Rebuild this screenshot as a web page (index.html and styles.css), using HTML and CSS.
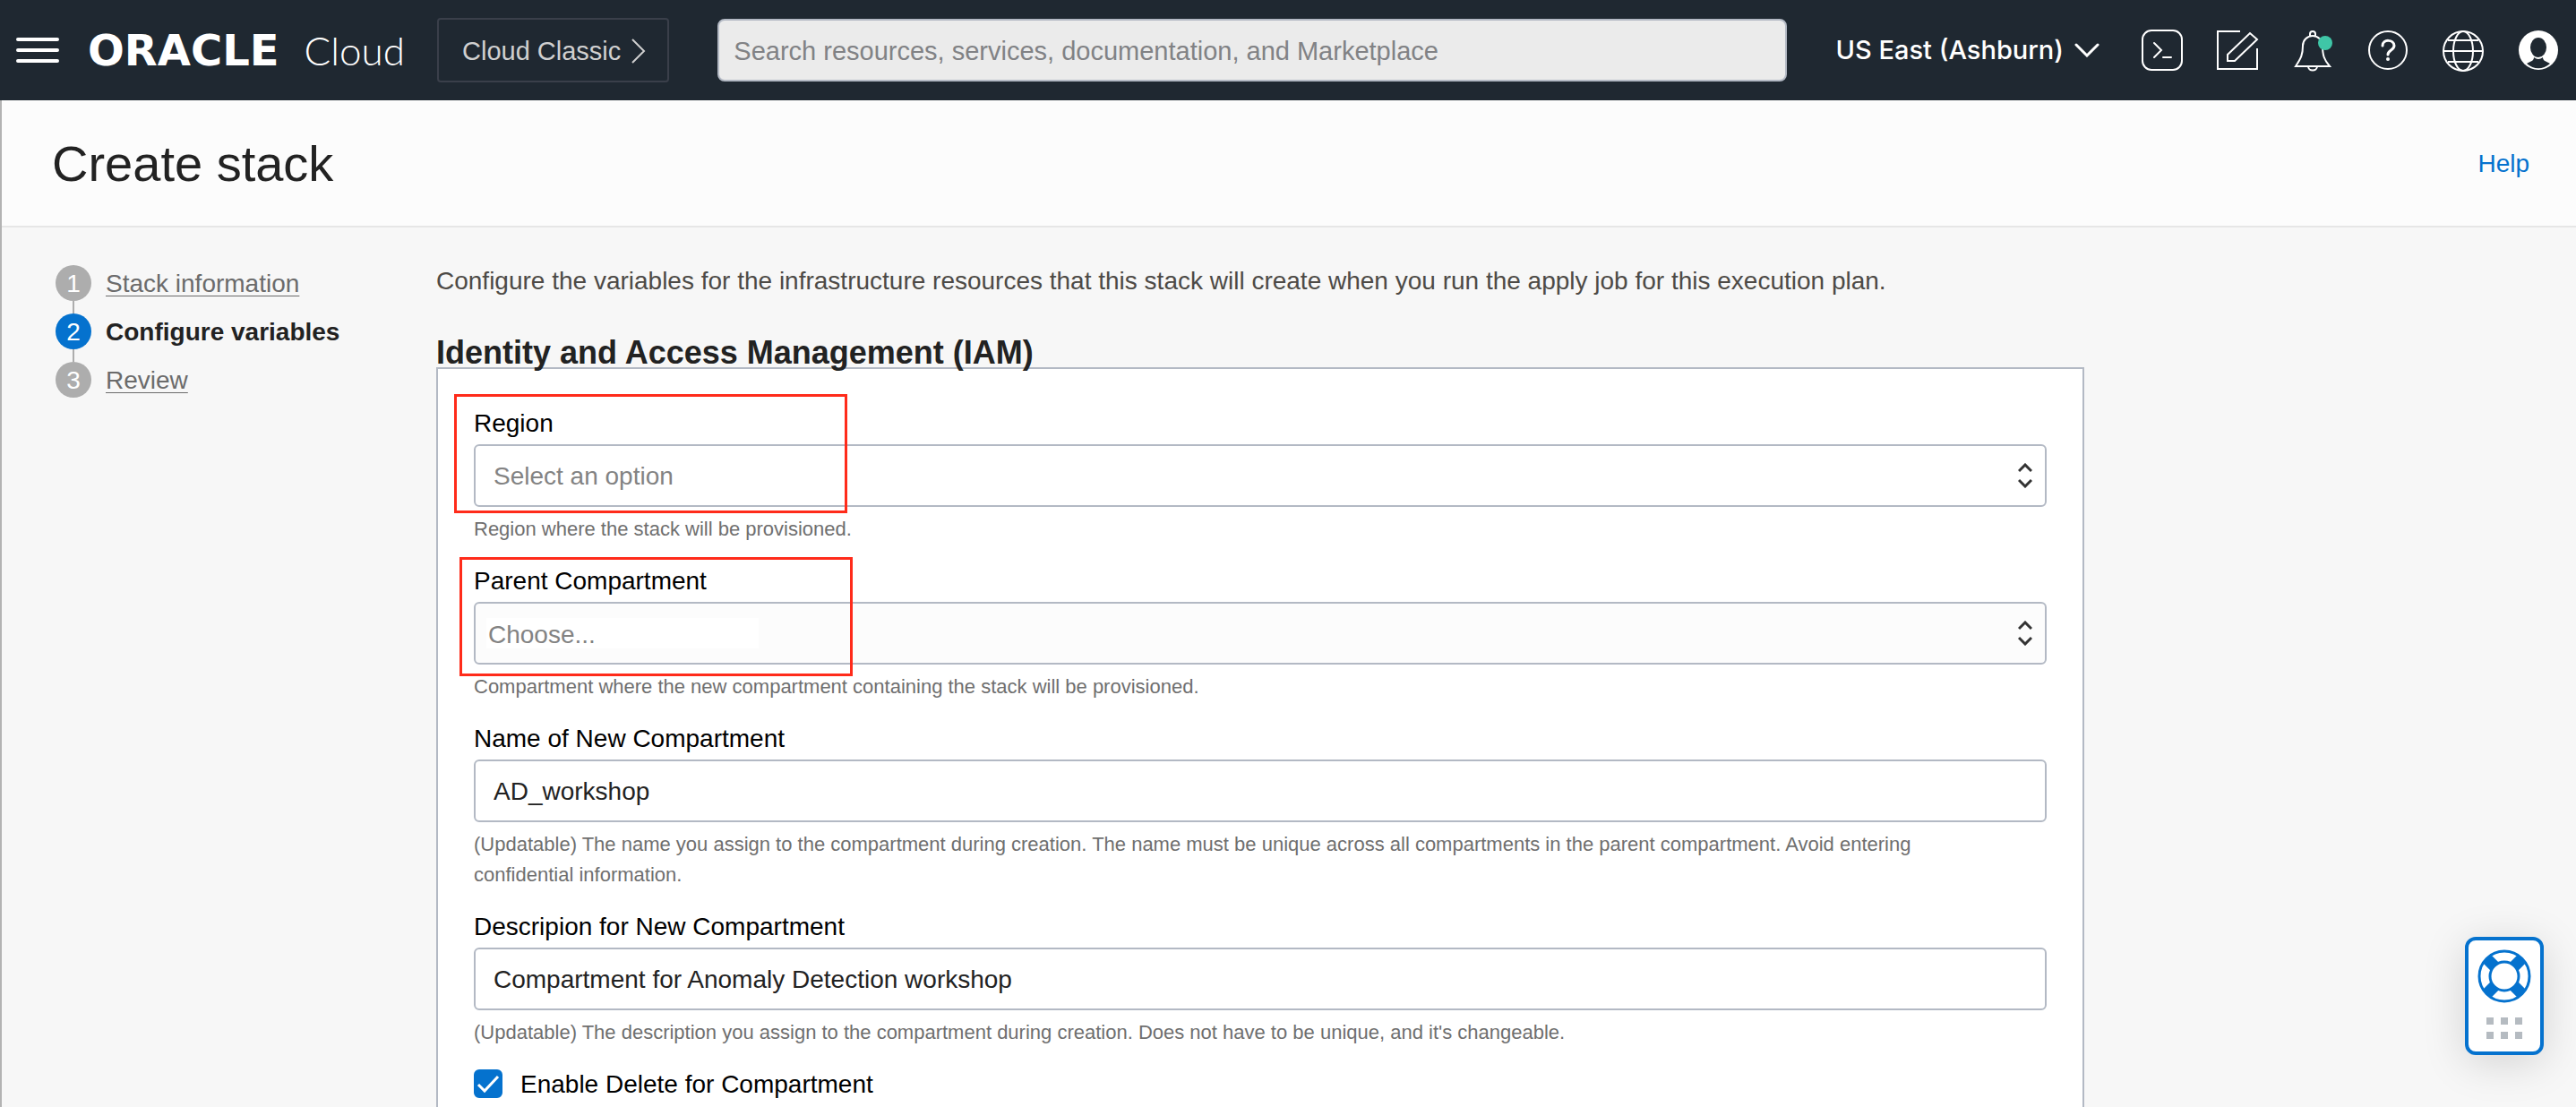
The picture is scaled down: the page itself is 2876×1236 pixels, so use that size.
FILE: index.html
```html
<!DOCTYPE html>
<html lang="en">
<head>
<meta charset="utf-8">
<meta name="viewport" content="width=device-width, initial-scale=1">
<title>Create stack</title>
<link rel="stylesheet" href="styles.css">
</head>
<body>
<header class="topbar">
  <button class="menu" type="button" aria-label="Navigation menu">
    <svg width="48" height="28" viewBox="0 0 48 28" stroke="#fff" stroke-width="4" stroke-linecap="round"><path d="M2 2h44M2 14h44M2 26h44"/></svg>
  </button>
  <a class="brand" href="#"><span class="brand-name">ORACLE</span><span class="brand-product">Cloud</span></a>
  <button class="classic" type="button">Cloud Classic
    <svg width="16" height="28" viewBox="0 0 16 28" fill="none" stroke="#d0d0d0" stroke-width="2"><path d="M1 1l13 13L1 27"/></svg>
  </button>
  <input class="search" type="search" aria-label="Search" placeholder="Search resources, services, documentation, and Marketplace">
  <button class="region" type="button">US East (Ashburn)
    <svg width="28" height="16" viewBox="0 0 28 16" fill="none" stroke="#fff" stroke-width="3" stroke-linecap="round"><path d="M2 2l12 12L26 2"/></svg>
  </button>
  <nav class="tools" aria-label="Tools">
    <button class="tool" type="button" aria-label="Developer tools">
      <svg width="48" height="48" viewBox="0 0 48 48" fill="none" stroke="#fff" stroke-width="2"><rect x="2" y="2" width="44" height="44" rx="10"/><path d="M15 16l8 8-8 8M25 32h9" stroke-linecap="round"/></svg>
    </button>
    <button class="tool" type="button" aria-label="Feedback">
      <svg width="48" height="48" viewBox="0 0 48 48" fill="none" stroke="#fff" stroke-width="2"><path d="M27 3H2v42h44V22"/><path d="M13 36v-7L38 5l8 7-25 24z"/></svg>
    </button>
    <button class="tool" type="button" aria-label="Announcements">
      <svg width="48" height="48" viewBox="0 0 48 48" fill="none" stroke="#fff" stroke-width="2"><path d="M21 8V6a3 3 0 0 1 6 0v2M13 19a11 11 0 0 1 22 0c0 11 2 16 8 23H5c6-9 8-13 8-23zM19 42c0 6 10 6 10 0"/><circle cx="38" cy="16" r="8" fill="#3fc6a7" stroke="none"/></svg>
    </button>
    <button class="tool" type="button" aria-label="Help menu">
      <svg width="48" height="48" viewBox="0 0 48 48" fill="none" stroke="#fff" stroke-width="2"><circle cx="24" cy="24" r="21"/><path d="M18 19c0-8 13-7 13 0 0 5-7 5-7 10" stroke-width="3" stroke-linecap="round"/><circle cx="24" cy="34" r="2" fill="#fff" stroke="none"/></svg>
    </button>
    <button class="tool" type="button" aria-label="Language">
      <svg width="48" height="48" viewBox="0 0 48 48" fill="none" stroke="#fff" stroke-width="2"><circle cx="24" cy="25" r="22"/><ellipse cx="24" cy="25" rx="11" ry="22"/><path d="M2 25h44M7 13h34M7 37h34"/></svg>
    </button>
    <button class="tool" type="button" aria-label="Profile">
      <svg width="48" height="48" viewBox="0 0 48 48"><circle cx="24" cy="24" r="22" fill="#fff"/><ellipse cx="24" cy="21" rx="9" ry="11" fill="#1f2831"/><path d="M11 39c5-3 8-3 8-7q5 4 10 0c0 4 3 4 8 7-8 7-18 7-26 0z" fill="#1f2831"/></svg>
    </button>
  </nav>
</header>

<div class="page">
  <div class="titlebar">
    <h1 class="title">Create stack</h1>
    <a class="help-link" href="#">Help</a>
  </div>

  <div class="content">
    <nav aria-label="Steps">
      <ol class="steps">
        <li class="step"><span class="step-dot">1</span><a class="step-link" href="#">Stack information</a></li>
        <li class="step step-current"><span class="step-dot">2</span><span>Configure variables</span></li>
        <li class="step"><span class="step-dot">3</span><a class="step-link" href="#">Review</a></li>
      </ol>
    </nav>

    <main class="main">
      <p class="intro">Configure the variables for the infrastructure resources that this stack will create when you run the apply job for this execution plan.</p>
      <h2 class="heading">Identity and Access Management (IAM)</h2>
      <form class="panel">
        <div class="field">
          <label class="label" for="region">Region</label>
          <div class="picker">
            <select class="control" id="region" aria-describedby="region-hint"><option>Select an option</option></select>
            <svg class="arrows" width="16" height="28" viewBox="0 0 16 28" fill="none" stroke="#333" stroke-width="3"><path d="M1 9l7-7 7 7M1 19l7 7 7-7"/></svg>
          </div>
          <p class="hint" id="region-hint">Region where the stack will be provisioned.</p>
          <span class="mark mark-region"></span>
        </div>
        <div class="field">
          <label class="label" for="parent">Parent Compartment</label>
          <div class="picker">
            <select class="control control-compartment" id="parent" aria-describedby="parent-hint"><option>Choose...</option></select>
            <svg class="arrows" width="16" height="28" viewBox="0 0 16 28" fill="none" stroke="#333" stroke-width="3"><path d="M1 9l7-7 7 7M1 19l7 7 7-7"/></svg>
          </div>
          <p class="hint" id="parent-hint">Compartment where the new compartment containing the stack will be provisioned.</p>
          <span class="mark mark-parent"></span>
        </div>
        <div class="field">
          <label class="label" for="name">Name of New Compartment</label>
          <input class="control" id="name" type="text" value="AD_workshop" aria-describedby="name-hint">
          <p class="hint" id="name-hint">(Updatable) The name you assign to the compartment during creation. The name must be unique across all compartments in the parent compartment. Avoid entering confidential information.</p>
        </div>
        <div class="field">
          <label class="label" for="description">Descripion for New Compartment</label>
          <input class="control" id="description" type="text" value="Compartment for Anomaly Detection workshop" aria-describedby="description-hint">
          <p class="hint" id="description-hint">(Updatable) The description you assign to the compartment during creation. Does not have to be unique, and it's changeable.</p>
        </div>
        <div class="check">
          <span class="tick">
            <input class="tick-box" id="enable-delete" type="checkbox" checked>
            <svg class="tick-mark" width="32" height="32" viewBox="0 0 32 32" fill="none" stroke="#fff" stroke-width="3"><path d="M5 17l7 7L27 8"/></svg>
          </span>
          <label class="label" for="enable-delete">Enable Delete for Compartment</label>
        </div>
      </form>
    </main>
  </div>
</div>

<button class="support" type="button" aria-label="Support">
  <svg width="60" height="60" viewBox="0 0 60 60" fill="none" stroke="#0572ce"><circle cx="30" cy="30" r="22" stroke="#fff" stroke-width="13"/><path d="M10 10l12 12M50 10L38 22M10 50l12-12M50 50L38 38" stroke-width="13"/><circle cx="30" cy="30" r="28" stroke-width="3"/><circle cx="30" cy="30" r="16" stroke-width="3" fill="#fff"/></svg>
  <svg width="40" height="24" viewBox="0 0 40 24" fill="#b5bbc1"><path d="M0 0h8v8H0zM16 0h8v8h-8zM32 0h8v8h-8zM0 16h8v8H0zM16 16h8v8h-8zM32 16h8v8h-8z"/></svg>
</button>
</body>
</html>
```
FILE: styles.css
```css
* {
  box-sizing: border-box;
}

body {
  margin: 0;
  min-height: 100vh;
  display: flex;
  flex-direction: column;
  background: #f7f7f7;
  color: #222;
  font: 28px/40px "Liberation Sans", Arial, sans-serif;
}

button {
  border: 0;
  padding: 0;
  background: none;
  color: inherit;
  font: inherit;
  cursor: pointer;
}

svg {
  display: block;
  flex: none;
}

h1, h2, p, ol {
  margin: 0;
  padding: 0;
}

.topbar {
  height: 112px;
  padding: 0 18px;
  display: flex;
  align-items: center;
  background: #1f2831;
  color: #fff;
  font-size: 29px;
  white-space: nowrap;
}

.brand {
  display: flex;
  align-items: baseline;
  justify-content: space-between;
  width: 354px;
  margin: 0 34px 0 32px;
  color: #fff;
  text-decoration: none;
}

.brand-name {
  font: bold 48px/56px "DejaVu Sans", sans-serif;
}

.brand-product {
  font: 300 44px/56px Lato, sans-serif;
}

.classic {
  display: flex;
  align-items: center;
  gap: 12px;
  height: 72px;
  margin-left: 2px;
  padding: 2px 24px 0 26px;
  border: 2px solid #3a3f4a;
  border-radius: 4px;
  color: #d0d0d0;
}

.search {
  flex: 0 1 1194px;
  min-width: 0;
  height: 70px;
  margin-left: 54px;
  padding: 2px 16px 0;
  border: 2px solid #b3b9c4;
  border-radius: 8px;
  background: #ebebeb;
  font: inherit;
}

.search::placeholder {
  color: #818285;
}

.region {
  display: flex;
  align-items: center;
  gap: 12px;
  margin-left: auto;
  font: 500 29px/40px Inter, sans-serif;
}

.tools {
  display: flex;
  gap: 36px;
  margin-left: 46px;
}

.page {
  flex: 1;
  display: flex;
  flex-direction: column;
  border-left: 2px solid #b3b3b3;
}

.titlebar {
  display: flex;
  align-items: center;
  justify-content: space-between;
  height: 142px;
  padding: 2px 52px 0 56px;
  border-bottom: 2px solid #e6e6e6;
  background: #fcfcfc;
}

.title {
  font-size: 56px;
  line-height: 64px;
  font-weight: normal;
}

.help-link {
  color: #0572ce;
  text-decoration: none;
}

.content {
  flex: 1;
  display: grid;
  grid-template-columns: 365px minmax(0, 1840px);
  column-gap: 60px;
  padding: 0 60px;
}

.steps {
  display: flex;
  flex-direction: column;
  gap: 14px;
  padding-top: 42px;
  list-style: none;
}

.step {
  display: flex;
  gap: 16px;
  height: 40px;
  line-height: 42px;
}

.step-dot {
  position: relative;
  width: 40px;
  height: 40px;
  border-radius: 50%;
  background: #adadad;
  color: #fff;
  font-weight: normal;
  text-align: center;
}

.step:not(:last-child) .step-dot::after {
  content: "";
  position: absolute;
  left: 19px;
  top: 40px;
  width: 2px;
  height: 14px;
  background: #adadad;
}

.step-link {
  color: #6b6b6b;
  text-decoration-thickness: 1px;
  text-underline-offset: 4px;
}

.step-current {
  font-weight: bold;
}

.step-current .step-dot {
  background: #0572ce;
}

.main {
  display: flex;
  flex-direction: column;
  padding-top: 40px;
}

.intro {
  margin-bottom: 42px;
  color: #4d4a46;
}

.heading {
  position: relative;
  z-index: 1;
  margin-bottom: -2px;
  font-size: 36px;
  line-height: 36px;
}

.panel {
  flex: 1;
  padding: 40px 40px 0;
  border: 2px solid #b3b9c4;
  border-bottom: 0;
  background: #fff;
}

.field {
  position: relative;
  margin-bottom: 20px;
}

.label {
  display: block;
  padding-top: 2px;
  color: #000;
  line-height: 38px;
}

.control {
  display: block;
  width: 100%;
  height: 70px;
  margin-top: 4px;
  padding: 2px 20px 0;
  border: 2px solid #b3b9c4;
  border-radius: 6px;
  background: #fff;
  color: #222;
  font: inherit;
  appearance: none;
}

.picker {
  display: grid;
  align-items: center;
}

.picker .control,
.arrows {
  grid-area: 1 / 1;
}

.picker .control {
  color: #838383;
}

.picker .control-compartment {
  padding: 4px 14px 0;
  background: #fcfcfc linear-gradient(#fff, #fff) 12px center / 304px 34px no-repeat;
}

.arrows {
  justify-self: end;
  margin: 4px 16px 0 0;
  pointer-events: none;
}

.hint {
  margin-top: 8px;
  padding-right: 40px;
  color: #6f6f6f;
  font-size: 22px;
  line-height: 34px;
}

.mark {
  position: absolute;
  width: 439px;
  height: 133px;
  border: 3px solid #ff2b1a;
  pointer-events: none;
}

.mark-region {
  left: -22px;
  top: -12px;
}

.mark-parent {
  left: -16px;
  top: -6px;
}

.check {
  display: flex;
  align-items: center;
  gap: 20px;
}

.tick {
  display: grid;
}

.tick-box,
.tick-mark {
  grid-area: 1 / 1;
}

.tick-box {
  width: 32px;
  height: 32px;
  margin: 0;
  border: 2px solid #b3b9c4;
  border-radius: 6px;
  appearance: none;
}

.tick-box:checked {
  border-color: #0572ce;
  background: #0572ce;
}

.tick-mark {
  pointer-events: none;
}

.support {
  position: fixed;
  right: 36px;
  bottom: 58px;
  display: flex;
  flex-direction: column;
  align-items: center;
  gap: 16px;
  width: 88px;
  height: 132px;
  padding-top: 10px;
  border: 4px solid #0572ce;
  border-radius: 12px;
  background: #fff;
  box-shadow: 0 8px 48px rgba(0, 0, 0, 0.15);
}
```
